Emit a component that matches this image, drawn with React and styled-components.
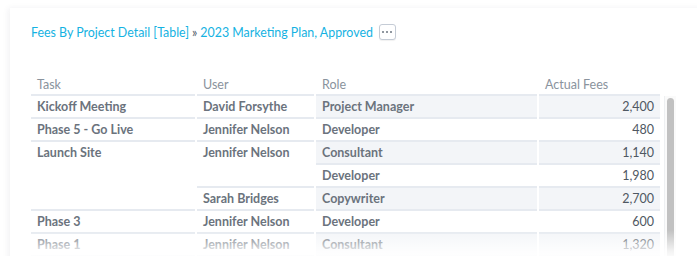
import styled, { createGlobalStyle } from 'styled-components'

const GlobalStyle = createGlobalStyle`
  html, body {
    margin: 0;
    padding: 0;
    background: #fff;
    overflow: hidden;
  }
  body {
    font-family: Lato, 'Open Sans', sans-serif;
  }
`

const Page = styled.div`
  width: 697px;
  height: 256px;
  padding: 8px 0 0 10px;
  box-sizing: border-box;
  overflow: hidden;
`

const Card = styled.div`
  position: relative;
  width: 700px;
  height: 300px;
  background: #fff;
  box-shadow: -2px 0 6px rgba(30, 40, 60, 0.06);
  padding: 15px 0 0 21px;
  box-sizing: border-box;
`

const Breadcrumb = styled.div`
  display: flex;
  align-items: center;
  gap: 5px;
  height: 18px;
  font-size: 12.4px;
  color: #14b2e2;
`

const Sep = styled.span`
  color: #555e6a;
  margin: 0 -2px;
`

const MoreButton = styled.button`
  display: flex;
  align-items: center;
  justify-content: center;
  gap: 2px;
  width: 17px;
  height: 16px;
  margin-left: 1px;
  padding: 0;
  background: #fff;
  border: 1px solid #c5ccd6;
  border-radius: 3px;
  box-shadow: 0 1px 1px rgba(0, 0, 0, 0.06);

  span {
    width: 2px;
    height: 2px;
    border-radius: 50%;
    background: #6d7680;
  }
`

const TableArea = styled.div`
  display: flex;
  align-items: flex-start;
  margin-top: 34px;
`

const Table = styled.table`
  border-collapse: separate;
  border-spacing: 2px 0;
  margin-left: -2px;
  table-layout: fixed;
  width: 631px;
  font-family: Lato, 'Open Sans', sans-serif;
  font-size: 12.5px;
`

const Th = styled.th`
  padding: 0;
  text-align: left;
  font-weight: 400;
  border-bottom: 2px solid #e6eaf0;
  vertical-align: middle;
`

const Td = styled.td`
  padding: 0;
  vertical-align: top;
  background: ${(p) => (p.$shade ? '#f3f5f8' : '#fff')};
  border-bottom: 2px solid #e6eaf0;
`

const CellText = styled.div`
  height: ${(p) => p.$h || 21}px;
  line-height: ${(p) => p.$h || 21}px;
  padding: 0 6px;
  white-space: nowrap;
  overflow: hidden;
  text-align: ${(p) => (p.$num ? 'right' : 'left')};
  font-weight: ${(p) => (p.$head || p.$num ? 400 : 700)};
  color: ${(p) => (p.$head ? '#8a939d' : p.$num ? '#4f5862' : '#6b737d')};
`

const Scrollbar = styled.div`
  width: 12px;
  height: 220px;
  margin-top: 21px;
  margin-left: 2px;
  border-left: 1px solid #eef0f2;
  background: #fafafa;
  padding: 2px 2px 0 2px;
  box-sizing: border-box;
`

const Thumb = styled.div`
  width: 7px;
  height: 200px;
  border-radius: 4px;
  background: #c1c1c1;
`

const Fade = styled.div`
  position: absolute;
  left: 0;
  right: 0;
  top: 222px;
  height: 30px;
  background: linear-gradient(rgba(255, 255, 255, 0), rgba(255, 255, 255, 0.8) 70%, #fff);
  pointer-events: none;
`

const rows = [
  { task: 'Kickoff Meeting', user: 'David Forsythe', role: 'Project Manager', fee: '2,400' },
  { task: 'Phase 5 - Go Live', user: 'Jennifer Nelson', role: 'Developer', fee: '480' },
  { task: 'Launch Site', taskSpan: 3, user: 'Jennifer Nelson', userSpan: 2, role: 'Consultant', fee: '1,140' },
  { role: 'Developer', fee: '1,980' },
  { user: 'Sarah Bridges', role: 'Copywriter', fee: '2,700' },
  { task: 'Phase 3', user: 'Jennifer Nelson', role: 'Developer', fee: '600' },
  { task: 'Phase 1', user: 'Jennifer Nelson', role: 'Consultant', fee: '1,320' },
]

const headers = ['Task', 'User', 'Role', 'Actual Fees']

export default function App() {
  return (
    <>
      <GlobalStyle />
      <Page>
        <Card>
          <Breadcrumb>
            <span>Fees By Project Detail [Table]</span>
            <Sep>»</Sep>
            <span>2023 Marketing Plan, Approved</span>
            <MoreButton aria-label="more">
              <span />
              <span />
              <span />
            </MoreButton>
          </Breadcrumb>
          <TableArea>
            <Table>
              <colgroup>
                <col style={{ width: 164 }} />
                <col style={{ width: 117 }} />
                <col style={{ width: 221 }} />
                <col style={{ width: 121 }} />
              </colgroup>
              <thead>
                <tr>
                  {headers.map((h) => (
                    <Th key={h}>
                      <CellText $head $h={19}>{h}</CellText>
                    </Th>
                  ))}
                </tr>
              </thead>
              <tbody>
                {rows.map((r, i) => (
                  <tr key={i}>
                    {r.task && (
                      <Td rowSpan={r.taskSpan || 1}>
                        <CellText>{r.task}</CellText>
                      </Td>
                    )}
                    {r.user && (
                      <Td rowSpan={r.userSpan || 1}>
                        <CellText>{r.user}</CellText>
                      </Td>
                    )}
                    <Td $shade={i % 2 === 0}>
                      <CellText>{r.role}</CellText>
                    </Td>
                    <Td $shade={i % 2 === 0}>
                      <CellText $num>{r.fee}</CellText>
                    </Td>
                  </tr>
                ))}
              </tbody>
            </Table>
            <Scrollbar>
              <Thumb />
            </Scrollbar>
          </TableArea>
          <Fade />
        </Card>
      </Page>
    </>
  )
}
